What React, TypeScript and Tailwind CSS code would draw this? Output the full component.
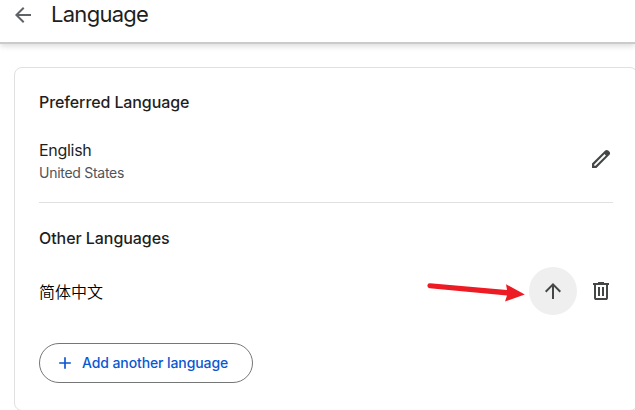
import React from "react";

const languages = [{ id: "zh-CN", label: "简体中文" }];

type IconProps = { path: string; className?: string };

function Icon({ path, className = "" }: IconProps) {
  return (
    <svg
      viewBox="0 0 24 24"
      fill="currentColor"
      aria-hidden="true"
      className={`shrink-0 ${className}`}
    >
      <path d={path} />
    </svg>
  );
}

const icons = {
  back: "M20 11H7.83l5.59-5.59L12 4l-8 8 8 8 1.41-1.41L7.83 13H20v-2z",
  up: "M4 12l1.41 1.41L11 7.83V20h2V7.83l5.58 5.59L20 12l-8-8-8 8z",
  edit: "M5.2 18.8h1.3L16.9 8.4 15.6 7.1 5.2 17.5V18.8zM3 21v-4.4L16.2 3.5q.7-.6 1.5-.6t1.5.6L20.5 4.8q.6.7.6 1.5t-.6 1.5L7.4 21H3z",
  trash:
    "M7 21q-.825 0-1.412-.587T5 19V6H4V4h5V3h6v1h5v2h-1v13q0 .825-.587 1.413T17 21H7zM17 6H7v13h10V6zM9 17h2V8H9v9zm4 0h2V8h-2v9z",
  add: "M11 13H5v-2h6V5h2v6h6v2h-6v6h-2v-6z",
};

export default function App() {
  return (
    <div className="h-[410px] w-[635px] overflow-hidden bg-white font-['Inter','Noto_Sans_CJK_SC',sans-serif] text-[#1f1f1f]">
      <header className="flex h-11 items-start border-b-2 border-[#cbcbcb] pl-[11px] pt-[3px] shadow-[0_2px_6px_rgba(0,0,0,0.15)]">
        <button aria-label="Back" className="text-[#5f6368]">
          <Icon path={icons.back} className="size-6" />
        </button>
        <h1 className="-mt-px ml-4 text-[22px] leading-6 tracking-[-0.72px]">
          Language
        </h1>
      </header>

      <main className="ml-3.5 mt-[23px] h-[344px] w-[624px] rounded-lg border border-[#e0e0e0] px-6">
        <h2 className="mt-[22px] text-base leading-6 font-medium tracking-[-0.1px]">
          Preferred Language
        </h2>
        <div className="mt-6 flex h-[45px] items-start justify-between">
          <div>
            <p className="text-base leading-6 tracking-[-0.3px]">English</p>
            <p className="mt-px text-sm leading-5 tracking-[-0.28px] text-[#50545a]">
              United States
            </p>
          </div>
          <button
            aria-label="Edit"
            className="-mr-3 -mt-[3px] flex size-12 items-center justify-center text-[#444746]"
          >
            <Icon path={icons.edit} className="size-6" />
          </button>
        </div>

        <hr className="mt-[19px] border-[#e0e0e0]" />

        <h2 className="mt-[23px] text-base leading-6 font-medium tracking-[-0.06px]">
          Other Languages
        </h2>
        {languages.map((language) => (
          <div
            key={language.id}
            className="mt-[17px] flex h-12 items-center justify-between"
          >
            <p className="mt-0.5 text-base leading-6 font-[350] text-black">
              {language.label}
            </p>
            <div className="relative -mr-3 flex text-[#444746]">
              {/* pointer towards the move up button */}
              <svg
                viewBox="0 0 100 24"
                className="absolute -left-[103px] top-[13px] h-6 w-[100px]"
                aria-hidden="true"
              >
                <path
                  d="M4 3.2 81 10.1 80 4.2 98.8 14.5 79 21.5 81 15.6 3.8 8.2A2.5 2.5 0 0 1 4 3.2Z"
                  fill="#ed1c24"
                />
              </svg>
              <button
                aria-label="Move up"
                className="flex size-12 items-center justify-center rounded-full bg-[#efefef]"
              >
                <Icon path={icons.up} className="size-6" />
              </button>
              <button
                aria-label="Delete"
                className="flex size-12 items-center justify-center"
              >
                <Icon path={icons.trash} className="size-6" />
              </button>
            </div>
          </div>
        ))}

        <button className="mt-7 flex h-10 w-[214px] items-center rounded-full border border-[#747775] pl-[15px] text-sm font-medium text-[#0b57d0]">
          <Icon path={icons.add} className="size-5" />
          <span className="ml-[7px] tracking-[-0.1px]">
            Add another language
          </span>
        </button>
      </main>
    </div>
  );
}
